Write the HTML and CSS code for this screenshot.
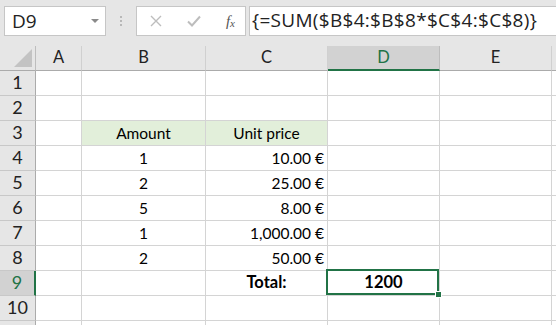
FILE: index.html
```html
<!DOCTYPE html>
<html lang="en">
<head>
    <meta charset="UTF-8">
    <title>Array formula total</title>
    <link rel="stylesheet" href="styles.css">
</head>
<body>
    <div class="formula-bar">
        <div class="name-box">
            <span class="cell-ref">D9</span>
            <span class="caret"></span>
        </div>
        <div class="grip"><i></i><i></i><i></i></div>
        <div class="fx-box">
            <svg class="btn" width="14" height="14" viewBox="0 0 14 14"><path d="M2 2 L12 12 M12 2 L2 12" stroke="#bdbdbd" stroke-width="1.4" fill="none"/></svg>
            <svg class="btn" width="16" height="14" viewBox="0 0 16 14"><path d="M2 7.5 L6 11.5 L14 2.5" stroke="#bdbdbd" stroke-width="2" fill="none"/></svg>
            <span class="fx">f<sub>x</sub></span>
        </div>
        <div class="formula-input">{=SUM($B$4:$B$8*$C$4:$C$8)}</div>
    </div>

    <div class="sheet">
        <div class="corner"><svg width="18" height="18" viewBox="0 0 18 18"><path d="M18 0 L18 18 L0 18 Z" fill="#c3c3c3"/></svg></div>
        <div class="col-head">A</div>
        <div class="col-head">B</div>
        <div class="col-head">C</div>
        <div class="col-head active">D</div>
        <div class="col-head">E</div>
        <div class="col-head"></div>

        <div class="row-head">1</div>
        <div class="cell"></div><div class="cell"></div><div class="cell"></div><div class="cell"></div><div class="cell"></div><div class="cell"></div>

        <div class="row-head">2</div>
        <div class="cell"></div><div class="cell"></div><div class="cell"></div><div class="cell"></div><div class="cell"></div><div class="cell"></div>

        <div class="row-head">3</div>
        <div class="cell"></div>
        <div class="cell label">Amount</div>
        <div class="cell label">Unit price</div>
        <div class="cell"></div><div class="cell"></div><div class="cell"></div>

        <div class="row-head">4</div>
        <div class="cell"></div>
        <div class="cell center">1</div>
        <div class="cell right">10.00 €</div>
        <div class="cell"></div><div class="cell"></div><div class="cell"></div>

        <div class="row-head">5</div>
        <div class="cell"></div>
        <div class="cell center">2</div>
        <div class="cell right">25.00 €</div>
        <div class="cell"></div><div class="cell"></div><div class="cell"></div>

        <div class="row-head">6</div>
        <div class="cell"></div>
        <div class="cell center">5</div>
        <div class="cell right">8.00 €</div>
        <div class="cell"></div><div class="cell"></div><div class="cell"></div>

        <div class="row-head">7</div>
        <div class="cell"></div>
        <div class="cell center">1</div>
        <div class="cell right">1,000.00 €</div>
        <div class="cell"></div><div class="cell"></div><div class="cell"></div>

        <div class="row-head">8</div>
        <div class="cell"></div>
        <div class="cell center">2</div>
        <div class="cell right">50.00 €</div>
        <div class="cell"></div><div class="cell"></div><div class="cell"></div>

        <div class="row-head active">9</div>
        <div class="cell"></div>
        <div class="cell"></div>
        <div class="cell center bold">Total:</div>
        <div class="cell center bold selected">1200</div>
        <div class="cell"></div><div class="cell"></div>

        <div class="row-head">10</div>
        <div class="cell"></div><div class="cell"></div><div class="cell"></div><div class="cell"></div><div class="cell"></div><div class="cell"></div>

        <div class="row-head"></div>
        <div class="cell"></div><div class="cell"></div><div class="cell"></div><div class="cell"></div><div class="cell"></div><div class="cell"></div>
    </div>
</body>
</html>
```

FILE: styles.css
```css
body {
    margin: 0;
    padding: 0;
    background-color: #ffffff;
    overflow: hidden;
    font-family: Lato, "Open Sans", sans-serif;
}

/* formula bar */
.formula-bar {
    height: 46px;
    box-sizing: border-box;
    padding: 6px 0 0 4px;
    background-color: #e6e6e6;
    display: flex;
    align-items: flex-start;
}
.name-box {
    width: 102px;
    height: 30px;
    box-sizing: border-box;
    background-color: #ffffff;
    border: 1px solid #c6c6c6;
    display: flex;
    align-items: center;
    justify-content: space-between;
    padding: 0 6px 0 7px;
}
.cell-ref {
    font-family: "Open Sans", sans-serif;
    font-size: 19px;
    color: #222222;
}
.caret {
    width: 0;
    height: 0;
    border-left: 4px solid transparent;
    border-right: 4px solid transparent;
    border-top: 4px solid #8a8a8a;
}
.grip {
    width: 30px;
    height: 30px;
    display: flex;
    flex-direction: column;
    align-items: center;
    justify-content: center;
    gap: 2px;
}
.grip i {
    width: 2px;
    height: 2px;
    background-color: #b8b8b8;
}
.fx-box {
    width: 110px;
    height: 30px;
    box-sizing: border-box;
    background-color: #ffffff;
    border: 1px solid #c6c6c6;
    display: flex;
    align-items: center;
    padding: 0 10px 0 12px;
    justify-content: space-between;
}
.fx {
    font-family: "Liberation Serif", serif;
    font-style: italic;
    font-size: 15px;
    color: #555555;
}
.fx sub {
    font-size: 11px;
    vertical-align: -1px;
}
.formula-input {
    flex: 1;
    height: 30px;
    margin-left: 3px;
    box-sizing: border-box;
    background-color: #ffffff;
    border: 1px solid #c6c6c6;
    border-right: none;
    font-family: "Open Sans", sans-serif;
    font-size: 19px;
    letter-spacing: 0.3px;
    color: #222222;
    line-height: 27px;
    padding-left: 2px;
    white-space: nowrap;
}

/* grid */
.sheet {
    display: grid;
    grid-template-columns: 36px 46px 124px 122px 112px 112px 1fr;
    grid-auto-rows: 25px;
    font-size: 15.5px;
    color: #000000;
}
.sheet > div {
    box-sizing: border-box;
    display: flex;
    align-items: flex-end;
    padding-bottom: 3px;
}
.corner {
    background-color: #e6e6e6;
    border-right: 1px solid #bdbdbd;
    border-bottom: 1px solid #ababab;
    align-items: flex-end;
    justify-content: flex-end;
    padding: 0 3px 3px 0 !important;
}
.corner svg {
    display: block;
}
.col-head {
    background-color: #e6e6e6;
    border-right: 1px solid #d0d0d0;
    border-bottom: 1px solid #ababab;
    justify-content: center;
    color: #222222;
    font-size: 16.5px;
}
.col-head.active {
    background-color: #d2d2d2;
    border-bottom: 2px solid #217346;
    border-right-color: #bdbdbd;
    color: #217346;
    padding-bottom: 2px !important;
}
.row-head {
    background-color: #e6e6e6;
    border-right: 1px solid #ababab;
    border-bottom: 1px solid #c8c8c8;
    justify-content: center;
    color: #222222;
    font-size: 18px;
    padding-bottom: 2px !important;
}
.row-head.active {
    background-color: #d2d2d2;
    border-right: 2px solid #217346;
    color: #217346;
}
.cell {
    border-right: 1px solid #d4d4d4;
    border-bottom: 1px solid #d4d4d4;
    padding-left: 3px;
    padding-right: 3px;
}
.cell.label {
    background-color: #e2efda;
    justify-content: center;
}
.center {
    justify-content: center;
}
.right {
    justify-content: flex-end;
}
.bold {
    font-weight: bold;
    font-size: 16.5px;
}
.selected {
    position: relative;
}
.selected::after {
    content: "";
    position: absolute;
    top: -2px;
    left: -2px;
    right: 0;
    bottom: 0;
    border: 2px solid #217346;
}
.selected::before {
    content: "";
    position: absolute;
    right: -3px;
    bottom: -3px;
    width: 5px;
    height: 5px;
    background-color: #217346;
    border: 1px solid #ffffff;
    z-index: 1;
}
```
